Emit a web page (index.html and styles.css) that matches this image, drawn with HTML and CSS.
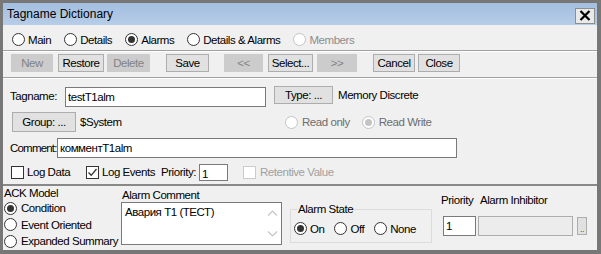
FILE: index.html
```html
<!DOCTYPE html>
<html lang="en">
<head>
    <meta charset="UTF-8">
    <title>Tagname Dictionary</title>
    <link rel="stylesheet" href="styles.css">
</head>
<body>
    <div class="window">
        <div class="titlebar">
            <span class="title">Tagname Dictionary</span>
            <span class="close-btn">
                <svg width="12" height="11" viewBox="0 0 12 11"><path d="M1.5 1 L10.5 10 M10.5 1 L1.5 10" stroke="#000" stroke-width="2.2" fill="none"/></svg>
            </span>
        </div>

        <!-- view switch -->
        <div class="tabs">
            <label class="opt"><span class="radio"></span>Main</label>
            <label class="opt"><span class="radio"></span>Details</label>
            <label class="opt"><span class="radio on"></span>Alarms</label>
            <label class="opt"><span class="radio"></span>Details &amp; Alarms</label>
            <label class="opt disabled"><span class="radio"></span>Members</label>
        </div>
        <div class="rule"></div>

        <!-- toolbar -->
        <div class="toolbar">
            <span class="btn disabled btn-new">New</span>
            <span class="btn btn-restore">Restore</span>
            <span class="btn disabled btn-delete">Delete</span>
            <span class="btn btn-save">Save</span>
            <span class="btn disabled btn-prev">&lt;&lt;</span>
            <span class="btn btn-select">Select...</span>
            <span class="btn disabled btn-next">&gt;&gt;</span>
            <span class="btn btn-cancel">Cancel</span>
            <span class="btn btn-close">Close</span>
        </div>
        <div class="rule"></div>

        <!-- tag fields -->
        <div class="form">
            <div class="row row-tag">
                <span class="lbl lbl-tag">Tagname:</span>
                <span class="field field-tag">testT1alm</span>
                <span class="btn btn-type">Type: ...</span>
                <span class="type-text">Memory Discrete</span>
            </div>

            <div class="row row-group">
                <div class="group-left">
                    <span class="btn btn-group">Group: ...</span>
                    <span class="group-text">$System</span>
                </div>
                <label class="opt dim"><span class="radio off"></span>Read only</label>
                <label class="opt dim"><span class="radio off on"></span>Read Write</label>
            </div>

            <div class="row row-comment">
                <span class="lbl lbl-comment">Comment:</span>
                <span class="field field-comment">комментT1alm</span>
            </div>

            <div class="row row-log">
                <label class="opt opt-logdata"><span class="check"></span>Log Data</label>
                <label class="opt opt-logevents"><span class="check">
                    <svg width="11" height="11" viewBox="0 0 11 11"><path d="M1.5 5.5 L4.2 8.3 L9.5 2" stroke="#333" stroke-width="1.3" fill="none"/></svg>
                </span>Log Events</label>
                <span class="lbl lbl-priority">Priority:</span>
                <span class="field field-priority">1</span>
                <label class="opt opt-retentive"><span class="check off"></span>Retentive Value</label>
            </div>
        </div>

        <!-- alarm settings -->
        <div class="bottom">
            <div class="ack">
                <div class="cap">ACK Model</div>
                <label class="opt ack-opt"><span class="radio on"></span>Condition</label>
                <label class="opt ack-opt"><span class="radio"></span>Event Oriented</label>
                <label class="opt ack-opt"><span class="radio"></span>Expanded Summary</label>
            </div>

            <div class="comment-col">
                <div class="cap">Alarm Comment</div>
                <div class="memo">
                    <span class="memo-text">Авария Т1 (ТЕСТ)</span>
                    <span class="memo-scroll">
                        <svg width="11" height="6" viewBox="0 0 11 6"><path d="M1 5.5 L5.5 1 L10 5.5" stroke="#c6c6c6" stroke-width="1.2" fill="none"/></svg>
                        <svg width="11" height="6" viewBox="0 0 11 6"><path d="M1 0.5 L5.5 5 L10 0.5" stroke="#c6c6c6" stroke-width="1.2" fill="none"/></svg>
                    </span>
                </div>
            </div>

            <fieldset class="state">
                <legend>Alarm State</legend>
                <div class="state-row">
                    <label class="opt"><span class="radio on"></span>On</label>
                    <label class="opt"><span class="radio"></span>Off</label>
                    <label class="opt"><span class="radio"></span>None</label>
                </div>
            </fieldset>

            <div class="inhibit">
                <span class="cap">Priority</span>
                <span class="cap cap-inhibit">Alarm Inhibitor</span>
                <span class="field field-alarm-pri">1</span>
                <div class="inhibit-box">
                    <span class="field field-inhibit"></span>
                    <span class="dots-btn">..</span>
                </div>
            </div>
        </div>
    </div>
</body>
</html>
```

FILE: styles.css
```css
* {
    box-sizing: border-box;
}

body {
    margin: 0;
    font-family: "Liberation Sans", Arial, sans-serif;
    font-size: 11.5px;
    letter-spacing: -0.45px;
    color: #000;
    background: #f0f0f0;
}

.window {
    width: 601px;
    height: 254px;
    border: 3px solid #777;
    border-right-width: 4px;
    border-bottom-width: 4px;
    background: #f0f0f0;
    display: flex;
    flex-direction: column;
}

/* title */
.titlebar {
    height: 22px;
    flex: none;
    display: flex;
    align-items: center;
    padding-left: 4px;
    background: linear-gradient(#a3bedf, #b7cde8);
}

.title {
    font-size: 12px;
    letter-spacing: 0;
}

.close-btn {
    margin: 3px 2px 0 auto;
    width: 20px;
    height: 16px;
    border: 1px solid #8e8e8e;
    background: #e9e9e9;
    display: flex;
    align-items: center;
    justify-content: center;
}

/* radio / checkbox */
.opt {
    display: flex;
    align-items: center;
    gap: 3px;
    white-space: nowrap;
}

.radio {
    width: 13px;
    height: 13px;
    flex: none;
    border: 1px solid #333;
    border-radius: 50%;
    background: #fff;
    display: flex;
    align-items: center;
    justify-content: center;
}

.radio.on::after {
    content: "";
    width: 7px;
    height: 7px;
    border-radius: 50%;
    background: #333;
}

.radio.off {
    border-color: #c4c4c4;
}

.radio.off.on::after {
    background: #c4c4c4;
}

.check {
    width: 13px;
    height: 13px;
    flex: none;
    border: 1px solid #333;
    background: #fff;
    display: flex;
    align-items: center;
    justify-content: center;
}

.check.off {
    border-color: #cccccc;
}

.opt.disabled {
    color: #8d8d8d;
}

.opt.disabled .radio {
    border-color: #c4c4c4;
}

.opt.dim {
    color: #6d6d6d;
}

.rule {
    height: 2px;
    flex: none;
    border-top: 1px solid #a0a0a0;
    border-bottom: 1px solid #fff;
}

/* tabs */
.tabs {
    height: 25px;
    flex: none;
    display: flex;
    align-items: center;
    padding: 4px 0 0 9px;
}

.tabs .opt {
    margin-right: 13px;
}

/* buttons */
.toolbar {
    height: 25px;
    flex: none;
    display: flex;
    align-items: flex-start;
    padding: 2px 0 0 8px;
}

.btn {
    height: 18px;
    flex: none;
    border: 1px solid #adadad;
    background: #e1e1e1;
    display: flex;
    align-items: center;
    justify-content: center;
    white-space: nowrap;
}

.btn.disabled {
    border-color: #cccccc;
    background: #cccccc;
    color: #838383;
}

.btn-new { width: 42px; }
.btn-restore { width: 46px; margin-left: 5px; }
.btn-delete { width: 43px; margin-left: 3px; }
.btn-save { width: 43px; margin-left: 16px; }
.btn-prev { width: 39px; margin-left: 15px; }
.btn-select { width: 45px; margin-left: 5px; }
.btn-next { width: 40px; margin-left: 4px; }
.btn-cancel { width: 42px; margin-left: 16px; }
.btn-close { width: 42px; margin-left: 3px; }

/* form */
.form {
    flex: 1;
    padding: 7px 0 0 7px;
}

.row {
    display: flex;
    align-items: center;
}

.lbl {
    flex: none;
    white-space: nowrap;
}

.field {
    height: 20px;
    flex: none;
    border: 1px solid #7a7a7a;
    background: #fff;
    padding: 0 2px;
    display: flex;
    align-items: center;
    white-space: nowrap;
}

.row-tag {
    height: 21px;
    align-items: flex-start;
}

.lbl-tag {
    width: 55px;
    line-height: 21px;
}

.field-tag {
    width: 201px;
    margin-top: 1px;
}

.btn-type {
    width: 59px;
    margin-left: 8px;
}

.type-text {
    margin-left: 5px;
    line-height: 18px;
}

.row-group {
    height: 20px;
    margin-top: 5px;
}

.group-left {
    width: 275px;
    flex: none;
    display: flex;
    align-items: center;
}

.btn-group {
    width: 64px;
    height: 20px;
    margin-left: 2px;
}

.group-text {
    margin-left: 4px;
}

.row-group .opt {
    gap: 4px;
    margin-right: 12px;
}

.row-comment {
    height: 20px;
    margin-top: 6px;
}

.lbl-comment {
    width: 47px;
    letter-spacing: -0.8px;
}

.field-comment {
    width: 400px;
}

.row-log {
    height: 18px;
    margin-top: 5px;
}

.opt-logdata {
    width: 75px;
    margin-left: 1px;
}

.opt-logevents {
    width: 75px;
}

.lbl-priority {
    width: 38px;
}

.field-priority {
    width: 29px;
    height: 17px;
    padding-top: 3px;
}

.opt-retentive {
    margin-left: 15px;
    gap: 4px;
    color: #a0a0a0;
}

/* alarm section */
.bottom {
    height: 66px;
    flex: none;
    display: flex;
    align-items: flex-start;
    border-top: 2px solid #888;
    padding-left: 1px;
}

.cap {
    height: 13px;
    line-height: 13px;
    white-space: nowrap;
}

.ack {
    width: 117px;
    flex: none;
    padding-top: 1px;
}

.ack-opt {
    height: 16.5px;
    gap: 4px;
}

.comment-col {
    width: 161px;
    flex: none;
    padding-top: 3px;
}

.comment-col .cap {
    padding-left: 1px;
}

.memo {
    height: 43px;
    border: 1px solid #7a7a7a;
    background: #fff;
    display: flex;
}

.memo-text {
    flex: 1;
    padding: 2px 0 0 3px;
    line-height: 14px;
}

.memo-scroll {
    width: 17px;
    display: flex;
    flex-direction: column;
    align-items: center;
    justify-content: space-between;
    padding: 7px 0 7px;
}

.state {
    width: 142px;
    height: 40px;
    flex: none;
    margin: 17px 0 0 8px;
    padding: 0 0 0 3px;
    border: 1px solid #dcdcdc;
}

.state legend {
    margin-left: 3px;
    padding: 0 1px;
    line-height: 13px;
}

.state-row {
    display: flex;
    margin-top: 6px;
}

.state-row .opt {
    margin-right: 10px;
}

.inhibit {
    margin-left: 9px;
    padding-top: 8px;
    display: grid;
    grid-template-columns: 37px auto;
    row-gap: 9px;
}

.cap-inhibit {
    padding-left: 2px;
}

.field-alarm-pri {
    width: 33px;
    margin-left: 2px;
}

.inhibit-box {
    display: flex;
    align-items: center;
}

.field-inhibit {
    width: 95px;
    background: #ececec;
    border-color: #adadad;
}

.dots-btn {
    width: 10px;
    height: 18px;
    margin-left: 4px;
    border: 1px solid #adadad;
    background: #e1e1e1;
    color: #555;
    font-size: 9px;
    line-height: 22px;
    text-align: center;
}
```
